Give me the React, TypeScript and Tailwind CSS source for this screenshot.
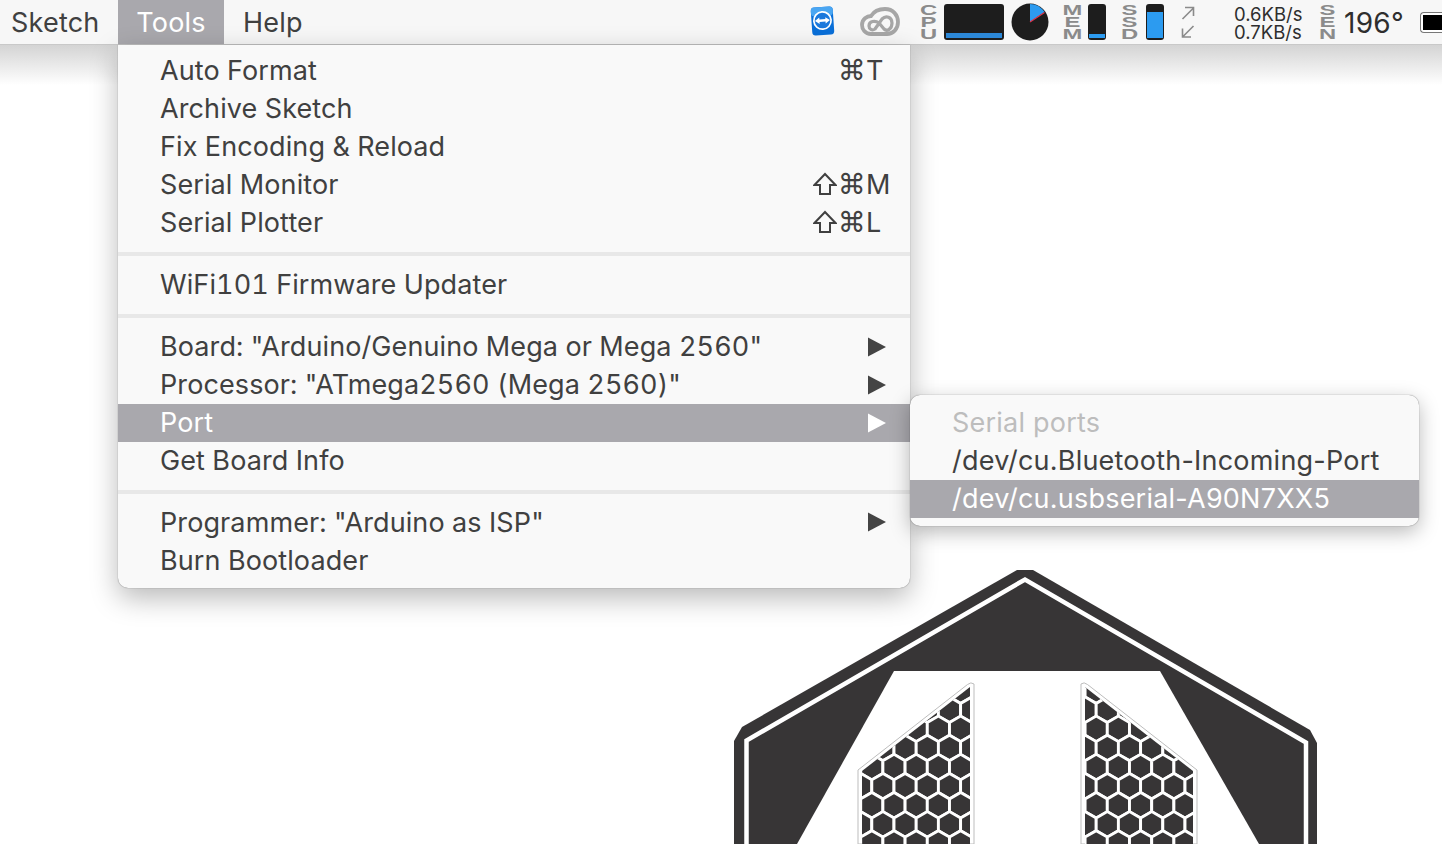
const sans = "font-['Inter','Noto_Sans',sans-serif]";

type MenuRow = {
  label: string;
  shift?: boolean;
  keyName?: string;
  arrow?: boolean;
  active?: boolean;
};

const groups: MenuRow[][] = [
  [
    { label: "Auto Format", keyName: "T" },
    { label: "Archive Sketch" },
    { label: "Fix Encoding & Reload" },
    { label: "Serial Monitor", shift: true, keyName: "M" },
    { label: "Serial Plotter", shift: true, keyName: "L" },
  ],
  [{ label: "WiFi101 Firmware Updater" }],
  [
    { label: 'Board: "Arduino/Genuino Mega or Mega 2560"', arrow: true },
    { label: 'Processor: "ATmega2560 (Mega 2560)"', arrow: true },
    { label: "Port", arrow: true, active: true },
    { label: "Get Board Info" },
  ],
  [
    { label: 'Programmer: "Arduino as ISP"', arrow: true },
    { label: "Burn Bootloader" },
  ],
];

const separators = [
  "mt-[11px] mb-[9px]",
  "mt-[11px] mb-[10px]",
  "mt-[10px] mb-[9px]",
];

const Arrow = ({ white }: { white?: boolean }) => (
  <svg width="18" height="20" viewBox="0 0 18 20" className="ml-auto mr-[24px]">
    <path d="M0 0.5 L18 10 L0 19.5 Z" fill={white ? "#ffffff" : "#444444"} />
  </svg>
);

const ShiftKey = () => (
  <svg width="24" height="24" viewBox="0 0 24 24" fill="none" stroke="#404040" strokeWidth="2">
    <path d="M12 2 L22.5 13 H17 V22 H7 V13 H1.5 Z" strokeLinejoin="miter" />
  </svg>
);

const Row = ({ row, lift }: { row: MenuRow; lift: boolean }) => (
  <div
    className={`flex h-[38px] items-center pl-[42px] text-[27px] leading-[38px] tabular-nums tracking-[0.1px] ${
      row.active ? "bg-[#a9a8ad] text-white" : "text-[#404040]"
    }`}
  >
    <span className={lift ? "pt-[2px]" : ""}>{row.label}</span>
    {row.arrow && <Arrow white={row.active} />}
    {row.keyName && (
      <span className="ml-auto flex w-[97px] items-center">
        <span className="flex w-[27px] items-center">{row.shift && <ShiftKey />}</span>
        <span className="ml-[-2px] w-[28px] pt-[2px] font-['DejaVu_Sans',sans-serif] text-[28px]">⌘</span>
        <span className="pt-[2px]">{row.keyName}</span>
      </span>
    )}
  </div>
);

const Stacked = ({ letters }: { letters: string }) => (
  <div className="w-[17px] origin-center scale-x-[1.7] whitespace-pre-line text-center font-['Liberation_Sans',sans-serif] text-[14px] font-bold leading-[12px] text-[#8b8b8b]">
    {letters.split("").join("\n")}
  </div>
);

const Meter = ({ fill }: { fill: string }) => (
  <div className="flex h-[36px] w-[18px] flex-col justify-end rounded-[3px] bg-[#1d1d1d] px-[1px] pb-[2px]">
    <div className={`${fill} bg-[#2c9bf0]`} />
  </div>
);

const TeamViewer = () => (
  <svg width="26" height="32" viewBox="0 0 26 32">
    <g transform="rotate(-4 13 15)">
      <rect x="1.5" y="1" width="22" height="28" rx="3.5" fill="#0a6fd8" />
      <rect x="1.5" y="1" width="22" height="9" rx="3.5" fill="#4aa6f2" />
      <circle cx="12.5" cy="14.5" r="9.5" fill="#ffffff" />
      <circle cx="12.5" cy="14.5" r="7.8" fill="#1a78dc" />
      <path d="M5 14.5 L9.5 11.3 V13.2 H15.5 V11.3 L20 14.5 L15.5 17.7 V15.8 H9.5 V17.7 Z" fill="#ffffff" />
    </g>
  </svg>
);

const CreativeCloud = () => (
  <svg width="40" height="30" viewBox="0 0 40 30" fill="none" stroke="#a6a6a6" strokeWidth="3.8">
    <path d="M11 27 C5 27 2 22 2 18 C2 12 7 9 11 9 C14 4 20 2 25 2 C33 2 38 8 38 15 C38 22 33 27 27 27 Z" />
    <path d="M9 19 C9 14 15 13 19 16 L24 22 C27 25 32 22 32 16 C32 10 26 8 22 12 L15 22 C12 24 9 22 9 19 Z" strokeWidth="3.2" />
  </svg>
);

const Pie = () => (
  <svg width="38" height="38" viewBox="0 0 38 38">
    <circle cx="19" cy="19" r="18.5" fill="#1d1d1d" />
    <path d="M19 19 V1 A18 18 0 0 1 33.5 9 Z" fill="#2c9bf0" />
    <path d="M19 19 L33.5 9.5" stroke="#e0344a" strokeWidth="1.2" />
  </svg>
);

const NetArrows = () => (
  <svg width="14" height="32" viewBox="0 0 14 32" fill="none" stroke="#8b8b8b" strokeWidth="1.6">
    <path d="M1.5 13 L12.5 2 M4 1.5 H12.5 V10" />
    <path d="M12.5 20 L1.5 31 M1.5 22.5 V31 H10" />
  </svg>
);

const HEX_DX = 22.2;
const HEX_DY = 19.1;
const HEX_R = 12.8;

// honeycomb cells, x/y are page coordinates shifted into the logo's box
const hexCells = (cx: number, cy: number) => {
  const cells: string[] = [];
  for (let r = -7; r < 8; r++) {
    for (let c = -9; c < 20; c++) {
      const x = cx + c * HEX_DX + (r % 2 !== 0 ? HEX_DX / 2 : 0);
      const y = cy + r * HEX_DY;
      const pts = [];
      for (let k = 0; k < 6; k++) {
        const a = (Math.PI / 3) * k + Math.PI / 6;
        pts.push(`${(x + HEX_R * Math.cos(a)).toFixed(1)},${(y + HEX_R * Math.sin(a)).toFixed(1)}`);
      }
      cells.push(pts.join(" "));
    }
  }
  return cells;
};

const Logo = () => {
  // box starts at page x 730, y 566
  const leftCells = hexCells(197.3, 182);
  const rightCells = hexCells(199.7, 182);
  const leftPanel = "M128 204 L237.5 118.5 Q241 115.5 244 118 V278 H128 Z";
  const rightPanel = "M467 204 L357.5 118.5 Q354 115.5 351 118 V278 H467 Z";
  return (
    <svg width="592" height="278" viewBox="0 0 592 278" className="ml-[730px] block">
      <defs>
        <clipPath id="panel-l">
          <path d="M132 205 L240 121 V278 H132 Z" />
        </clipPath>
        <clipPath id="panel-r">
          <path d="M463 205 L355 121 V278 H463 Z" />
        </clipPath>
      </defs>
      <path
        d="M4 175 L12 161 L287 4 H303 L580 164 L587 177 V278 H4 Z"
        fill="#373536"
      />
      <path
        d="M16.5 278 V174.5 L295 13.5 L576 176.5 V278"
        fill="none"
        stroke="#ffffff"
        strokeWidth="4.5"
      />
      <path d="M164 105 H430 L529 278 H67 Z" fill="#ffffff" />
      <path d={leftPanel} fill="#ffffff" stroke="#bdbdbd" strokeWidth="1" />
      <path d={rightPanel} fill="#ffffff" stroke="#bdbdbd" strokeWidth="1" />
      <g clipPath="url(#panel-l)">
        {leftCells.map((p, i) => (
          <polygon key={i} points={p} fill="#373536" stroke="#ffffff" strokeWidth="2.9" />
        ))}
      </g>
      <g clipPath="url(#panel-r)">
        {rightCells.map((p, i) => (
          <polygon key={i} points={p} fill="#373536" stroke="#ffffff" strokeWidth="2.9" />
        ))}
      </g>
    </svg>
  );
};

export default function App() {
  return (
    <div className={`relative h-[844px] w-[1442px] overflow-hidden bg-white ${sans}`}>
      {/* menu bar */}
      <div className="flex h-[45px] items-stretch border-b border-[#c9c9c9] bg-[#f7f7f7] text-[27px] tracking-[0.2px] text-[#404040]">
        <div className="flex w-[118px] items-center pl-[11px] pt-[2px]">Sketch</div>
        <div className="flex w-[106px] items-center justify-center bg-[#a9a8ad] pt-[2px] text-white">Tools</div>
        <div className="flex items-center pl-[19px] pt-[2px]">Help</div>

        <div className="ml-auto flex items-center tracking-normal">
          <TeamViewer />
          <div className="ml-[24px]">
            <CreativeCloud />
          </div>
          <div className="ml-[20px]">
            <Stacked letters="CPU" />
          </div>
          <div className="ml-[7px] flex h-[36px] w-[60px] items-end rounded-[3px] bg-[#1d1d1d] px-[2px] pb-[2px]">
            <div className="h-[5px] w-full bg-[#2c88d8]" />
          </div>
          <div className="ml-[7px]">
            <Pie />
          </div>
          <div className="ml-[15px]">
            <Stacked letters="MEM" />
          </div>
          <div className="ml-[7px]">
            <Meter fill="h-[4px]" />
          </div>
          <div className="ml-[15px]">
            <Stacked letters="SSD" />
          </div>
          <div className="ml-[8px]">
            <Meter fill="h-[26px]" />
          </div>
          <div className="ml-[17px]">
            <NetArrows />
          </div>
          <div className="ml-[39px] w-[72px] whitespace-pre-line pt-[2px] text-[18.5px] leading-[18.5px] text-[#2e2e2e]">
            {"0.6KB/s\n0.7KB/s"}
          </div>
          <div className="ml-[13px]">
            <Stacked letters="SEN" />
          </div>
          <div className="ml-[8px] w-[76px] pt-[1px] text-[28px] tracking-[0.3px] text-[#2e2e2e]">196°</div>
          <div className="flex h-[21px] w-[22px] items-stretch rounded-l-[4px] border border-r-0 border-[#777777] bg-white py-[2px] pl-[2px]">
            <div className="w-full bg-black" />
          </div>
        </div>
      </div>

      {/* shadow the menu bar throws on the window */}
      <div className="h-[40px] bg-gradient-to-b from-[#d4d4d4] to-white" />

      <div className="mt-[481px]">
        <Logo />
      </div>

      {/* Tools menu */}
      <div className="absolute left-[118px] top-[45px] w-[792px] rounded-b-[10px] bg-[#f9f9f9] pt-[6px] pb-[9px] shadow-[0_0_1px_rgba(0,0,0,0.6),0_10px_28px_rgba(0,0,0,0.28)]">
        {groups.map((rows, i) => (
          <div key={i}>
            {i > 0 && <div className={`${separators[i - 1]} h-[4px] bg-[#e8e8e8]`} />}
            {rows.map((row) => (
              <Row key={row.label} row={row} lift={i !== 2} />
            ))}
          </div>
        ))}
      </div>

      {/* Port submenu */}
      <div className="absolute left-[910px] top-[395px] w-[509px] rounded-[10px] bg-[#f9f9f9] pt-[9px] pb-[8px] text-[27px] leading-[38px] tracking-[0.22px] shadow-[0_0_1px_rgba(0,0,0,0.6),0_6px_20px_rgba(0,0,0,0.28)]">
        <div className="h-[38px] pl-[42px] text-[#bdbdbd]">Serial ports</div>
        <div className="h-[38px] pl-[42px] text-[#404040]">/dev/cu.Bluetooth-Incoming-Port</div>
        <div className="h-[38px] bg-[#a9a8ad] pl-[42px] text-white">/dev/cu.usbserial-A90N7XX5</div>
      </div>
    </div>
  );
}
